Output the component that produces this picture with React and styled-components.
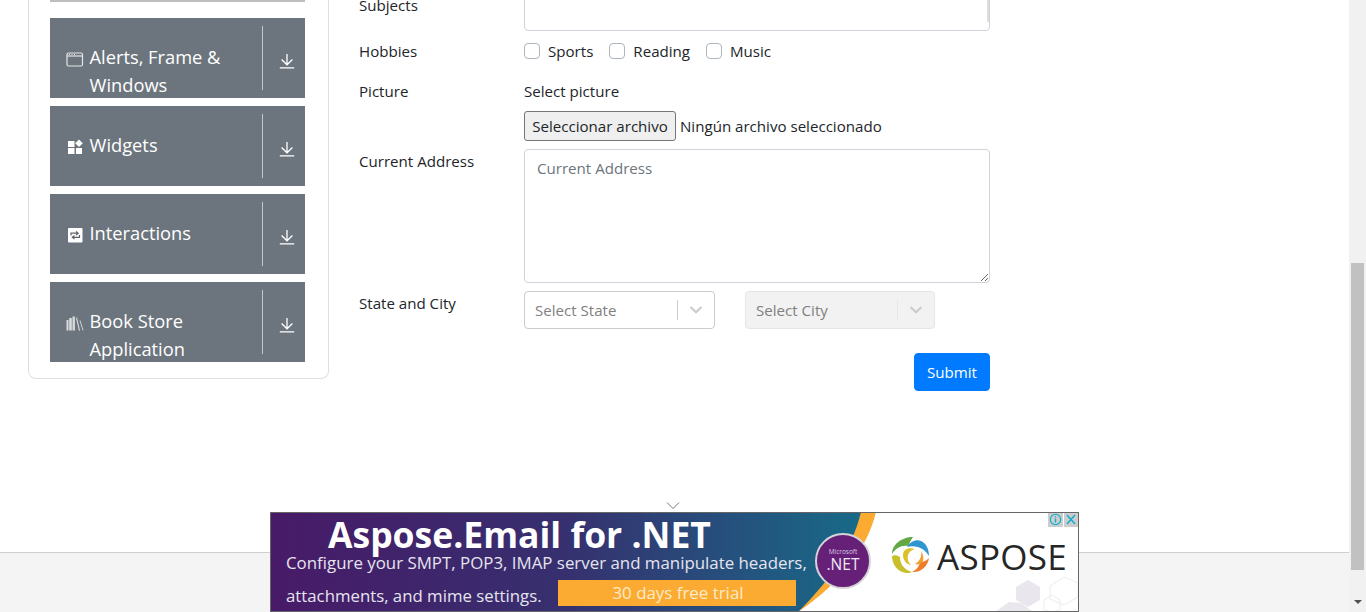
import styled, { createGlobalStyle } from "styled-components";

const GlobalStyle = createGlobalStyle`
  html, body {
    margin: 0;
    padding: 0;
    height: 100%;
    overflow: hidden;
    background: #fff;
    font-family: "Open Sans", "Noto Sans", sans-serif;
    font-size: 15.1px;
    color: #212529;
  }
  * { box-sizing: border-box; }
`;

function WindowIcon() {
  return (
    <svg width="18" height="16" viewBox="0 0 18 16" fill="none">
      <rect x="1" y="2" width="15.5" height="13" rx="1.5" stroke="#e4e6e8" strokeWidth="1.2" />
      <path d="M1 5h15.5" stroke="#e4e6e8" strokeWidth="1.2" />
      <path d="M3 3.5h1M5.5 3.5h1M8 3.5h1" stroke="#e4e6e8" />
    </svg>
  );
}

function WidgetsIcon() {
  return (
    <svg width="18" height="16" viewBox="0 0 18 16" fill="#fff">
      <rect x="2" y="2" width="6.5" height="6" />
      <path d="M13 0.5l3.8 3.8-3.8 3.8-3.8-3.8z" />
      <rect x="2" y="9" width="6.5" height="6" />
      <rect x="10" y="9" width="6" height="6" />
    </svg>
  );
}

function RepeatIcon() {
  return (
    <svg width="18" height="16" viewBox="0 0 18 16">
      <rect x="2" y="1" width="14.5" height="14.5" rx="1" fill="#fff" />
      <path d="M5 8.5V6.2h6.5M10 4.4l2.2 1.8L10 8M13.5 8v2.3H7M8.5 12.1l-2.2-1.8 2.2-1.8" fill="none" stroke="#5f666d" strokeWidth="1.2" />
    </svg>
  );
}

function BooksIcon() {
  return (
    <svg width="18" height="16" viewBox="0 0 18 16" fill="#d8dbde">
      <rect x="0.5" y="5" width="2" height="10.5" />
      <rect x="3.2" y="3" width="2.6" height="12.5" />
      <rect x="6.5" y="1.5" width="2.4" height="14" />
      <path d="M10 3l1-.4 3 12.9-1 .4z" />
      <path d="M13.5 5.5l.8-.3 3.2 10-.8.3z" />
    </svg>
  );
}

function DownIcon() {
  return (
    <svg width="16" height="16" viewBox="0 0 16 16" fill="none" stroke="#fff" strokeWidth="1.3">
      <path d="M8 1v10.5M2.6 6.5L8 11.8l5.4-5.3M.8 14.9h14.4" />
    </svg>
  );
}

function ChevronDown() {
  return (
    <svg width="14" height="10" viewBox="0 0 14 10" fill="none" stroke="#cccccc" strokeWidth="2.2">
      <path d="M1.5 2l5.5 5.2L12.5 2" />
    </svg>
  );
}

function AdBanner() {
  return (
    <svg width="809" height="100" viewBox="270 512 809 100" style={{ display: "block" }}>
      <defs>
        <linearGradient id="adBg" x1="0" x2="1" y1="0" y2="0">
          <stop offset="0" stopColor="#481a68" />
          <stop offset="0.5" stopColor="#36306f" />
          <stop offset="1" stopColor="#186a88" />
        </linearGradient>
      </defs>
      <rect x="270" y="512" width="809" height="100" fill="#fff" />
      <path d="M270 512H876C868 545 845 580 798 612H270z" fill="#fbaa32" />
      <path d="M270 512H861C853 545 835 575 798 612H270z" fill="url(#adBg)" />
      <g fill="#e9e6ee">
        <path d="M1016 587l12-7 12 7v13l-12 7-12-7z" />
        <path d="M995 612l14-10 12 1 12 9z" />
      </g>
      <g fill="none" stroke="#ecebf0">
        <path d="M1050 586l14-9 14 6v14l-14 8-14-6z" />
        <path d="M1044 600l8-5 8 5v10l-8 2-8-2z" />
      </g>
      <text x="328" y="548" fontFamily="Open Sans" fontWeight="700" fontSize="35.5" fill="#fff">Aspose.Email for .NET</text>
      <text x="286" y="569" fontFamily="Open Sans" fontSize="16.87" fill="#e6e4ee">Configure your SMPT, POP3, IMAP server and manipulate headers,</text>
      <text x="286" y="602" fontFamily="Open Sans" fontSize="16.8" fill="#e6e4ee">attachments, and mime settings.</text>
      <rect x="558" y="580" width="238" height="26" fill="#fbaa32" />
      <text x="678" y="599" textAnchor="middle" fontFamily="Open Sans" fontSize="16.9" fill="#fdebc8">30 days free trial</text>
      <circle cx="843" cy="561" r="27" fill="#672078" stroke="#d4d4d8" strokeWidth="2" />
      <text x="843" y="554" textAnchor="middle" fontFamily="Open Sans" fontSize="6.5" fill="#d8c8e0">Microsoft</text>
      <text x="843" y="570" textAnchor="middle" fontFamily="Open Sans" fontSize="15.5" fill="#f0e8f4">.NET</text>
      <g>
        <path d="M913 537c-12 0-21 8-21 17 4-6 9-9 17-8 0-3 2-6 4-9z" fill="#63a845" />
        <path d="M907 547c3-5 9-8 14-6 5 2 8 8 8 15-3-5-7-8-11-9-4-1-8-1-11 0z" fill="#2f97d0" />
        <path d="M892 556c0 9 6 16 14 17 2 0 4 0 6-1-7-2-12-7-12-15-3-2-6-2-8-1z" fill="#c8c02a" />
        <path d="M929 558c-1 8-8 15-17 14 4-2 7-5 8-10 3 0 6-1 9-4z" fill="#ee7d2a" />
        <path d="M915 549c-7-2-12 1-12 6 0 5 3 9 8 10-3-3-4-6-3-10 1-3 3-5 7-6z" fill="#dcc02a" />
        <path d="M921 551c1 5-1 10-6 13 3 1 6 0 8-3 1-3 0-7-2-10z" fill="#f0a030" />
      </g>
      <text x="937" y="570" fontFamily="Open Sans" fontWeight="500" fontSize="35" letterSpacing="0.3" fill="#262626">ASPOSE</text>
      <rect x="1048" y="512" width="15" height="15" fill="#cdcdcd" />
      <rect x="1064" y="512" width="15" height="15" fill="#cdcdcd" />
      <circle cx="1055.5" cy="519.5" r="5.2" fill="none" stroke="#00aecd" strokeWidth="1.1" />
      <path d="M1055.5 518.5v4M1055.5 516.2v1.2" stroke="#00aecd" strokeWidth="1.3" />
      <path d="M1067 515l8 9M1075 515l-8 9" stroke="#00aecd" strokeWidth="1.3" />
      <rect x="270.5" y="512.5" width="808" height="99" fill="none" stroke="#666" />
    </svg>
  );
}

const groups = [
  { icon: <WindowIcon />, title: "Alerts, Frame & Windows" },
  { icon: <WidgetsIcon />, title: "Widgets" },
  { icon: <RepeatIcon />, title: "Interactions" },
  { icon: <BooksIcon />, title: "Book Store Application" },
];

export default function App() {
  return (
    <>
      <GlobalStyle />
      <Viewport>
        <Page>
          <Main>
            <Sidebar>
              <GroupEdge />
              {groups.map((group) => (
                <Group key={group.title}>
                  <GroupIcon>{group.icon}</GroupIcon>
                  <GroupTitle>{group.title}</GroupTitle>
                  <GroupDivider />
                  <GroupToggle>
                    <DownIcon />
                  </GroupToggle>
                </Group>
              ))}
            </Sidebar>
            <Form>
              <Row>
                <Label>Subjects</Label>
                <SubjectsBox />
              </Row>
              <Row $gap={16}>
                <Label>Hobbies</Label>
                <Checks>
                  {["Sports", "Reading", "Music"].map((name) => (
                    <Check key={name}>
                      <CheckBox type="checkbox" />
                      {name}
                    </Check>
                  ))}
                </Checks>
              </Row>
              <Row>
                <Label>Picture</Label>
                <div>
                  <PictureLabel>Select picture</PictureLabel>
                  <FileRow>
                    <FileButton type="button">Seleccionar archivo</FileButton>
                    <span>Ningún archivo seleccionado</span>
                  </FileRow>
                </div>
              </Row>
              <Row>
                <Label>Current Address</Label>
                <Address placeholder="Current Address" />
              </Row>
              <Row $gap={24}>
                <Label>State and City</Label>
                <Selects>
                  <SelectBox $width={191}>
                    <SelectText>Select State</SelectText>
                    <SelectLine />
                    <SelectArrow>
                      <ChevronDown />
                    </SelectArrow>
                  </SelectBox>
                  <SelectBox $width={190} $disabled>
                    <SelectText>Select City</SelectText>
                    <SelectLine $disabled />
                    <SelectArrow>
                      <ChevronDown />
                    </SelectArrow>
                  </SelectBox>
                </Selects>
              </Row>
              <SubmitRow>
                <Submit type="button">Submit</Submit>
              </SubmitRow>
            </Form>
          </Main>
          <Footer />
          <AdSlot>
            <AdChevron>
              <svg width="14" height="7" viewBox="0 0 14 7" fill="none" stroke="#777">
                <path d="M1 .5l6 6 6-6" />
              </svg>
            </AdChevron>
            <AdBanner />
          </AdSlot>
        </Page>
        <ScrollBar>
          <ScrollThumb />
          <ScrollArrow />
        </ScrollBar>
      </Viewport>
    </>
  );
}

const Viewport = styled.div`
  display: flex;
  width: 1366px;
  height: 612px;
  overflow: hidden;
`;

const Page = styled.div`
  position: relative;
  flex: 1;
  display: flex;
  flex-direction: column;
  min-width: 0;
`;

const Main = styled.div`
  display: flex;
  align-items: flex-start;
  height: 552px;
  padding-left: 28px;
`;

const Sidebar = styled.aside`
  width: 301px;
  display: flex;
  flex-direction: column;
  gap: 8px;
  padding: 0 23px 16px 21px;
  border: 1px solid #dfdfdf;
  border-top: none;
  border-radius: 0 0 8px 8px;
`;

const GroupEdge = styled.div`
  height: 2px;
  margin-bottom: 8px;
  background: #bdbdbd;
`;

const Group = styled.div`
  display: flex;
  height: 80px;
  overflow: hidden;
  background: #6c757d;
  color: #fff;
`;

const GroupIcon = styled.div`
  width: 39.5px;
  flex: none;
  padding: 33px 0 0 16px;
  line-height: 0;
`;

const GroupTitle = styled.div`
  width: 172.5px;
  flex: none;
  padding-top: 25px;
  font-size: 18.3px;
  line-height: 28px;
`;

const GroupDivider = styled.div`
  width: 1px;
  height: 64px;
  margin-top: 8px;
  flex: none;
  background: #c3c7ca;
`;

const GroupToggle = styled.div`
  padding: 35px 0 0 16px;
  line-height: 0;
`;

const Form = styled.form`
  width: 631px;
  margin: -7px 0 0 30px;
  display: flex;
  flex-direction: column;
`;

const Row = styled.div`
  display: grid;
  grid-template-columns: 165px 466px;
  margin-bottom: ${(p) => p.$gap || 8}px;
`;

const Label = styled.div`
  line-height: 24px;
`;

const SubjectsBox = styled.div`
  position: relative;
  height: 38px;
  border: 1px solid #ced4da;
  border-radius: 4px;

  &::after {
    content: "";
    position: absolute;
    top: 0;
    right: 0;
    width: 2px;
    height: 28px;
    background: #dedede;
  }
`;

const Checks = styled.div`
  display: flex;
  gap: 16px;
  height: 24px;
  align-items: center;
`;

const Check = styled.label`
  display: flex;
  align-items: center;
  gap: 8px;
`;

const CheckBox = styled.input`
  appearance: none;
  width: 16px;
  height: 16px;
  margin: 0;
  background: #fff;
  border: 1px solid #adb5bd;
  border-radius: 4px;
`;

const PictureLabel = styled.div`
  line-height: 24px;
  margin-bottom: 8px;
`;

const FileRow = styled.div`
  display: flex;
  align-items: center;
  gap: 4px;
  height: 30px;
`;

const FileButton = styled.button`
  width: 152px;
  height: 30px;
  padding: 0;
  background: #efefef;
  border: 1px solid #767676;
  border-radius: 3px;
  font: inherit;
  color: #212529;
`;

const Address = styled.textarea`
  display: block;
  width: 466px;
  height: 134px;
  padding: 6px 12px;
  border: 1px solid #ced4da;
  border-radius: 4px;
  font: inherit;
  line-height: 24px;
  color: #495057;

  &::placeholder {
    color: #6c757d;
    opacity: 1;
  }
`;

const Selects = styled.div`
  display: flex;
  gap: 30px;
`;

const SelectBox = styled.div`
  width: ${(p) => p.$width}px;
  height: 38px;
  display: flex;
  align-items: center;
  background: ${(p) => (p.$disabled ? "#f2f2f2" : "#fff")};
  border: 1px solid ${(p) => (p.$disabled ? "#e6e6e6" : "#cccccc")};
  border-radius: 4px;
`;

const SelectText = styled.div`
  flex: 1;
  padding-left: 10px;
  color: #808080;
`;

const SelectLine = styled.div`
  width: 1px;
  height: 20px;
  background: ${(p) => (p.$disabled ? "#e6e6e6" : "#cccccc")};
`;

const SelectArrow = styled.div`
  width: 36px;
  display: flex;
  justify-content: center;
  line-height: 0;
`;

const SubmitRow = styled.div`
  display: flex;
  justify-content: flex-end;
`;

const Submit = styled.button`
  width: 76px;
  height: 38px;
  padding: 0;
  background: #007bff;
  border: 1px solid #007bff;
  border-radius: 4px;
  color: #fff;
  font: inherit;
`;

const Footer = styled.footer`
  flex: 1;
  background: #f4f4f4;
  border-top: 1px solid #cfcfcf;
`;

const AdSlot = styled.div`
  position: absolute;
  left: 270px;
  bottom: 0;
  width: 809px;
`;

const AdChevron = styled.div`
  display: flex;
  justify-content: center;
  height: 12px;
  margin-left: -3px;
  padding-top: 2px;
  line-height: 0;
`;

const ScrollBar = styled.div`
  width: 17px;
  flex: none;
  display: flex;
  flex-direction: column;
  align-items: center;
  padding-top: 263px;
  background: #f1f1f1;
`;

const ScrollThumb = styled.div`
  width: 13px;
  height: 307px;
  background: #c1c1c1;
`;

const ScrollArrow = styled.div`
  margin-top: 30px;
  width: 0;
  height: 0;
  border-left: 4px solid transparent;
  border-right: 4px solid transparent;
  border-top: 4px solid #505050;
`;
